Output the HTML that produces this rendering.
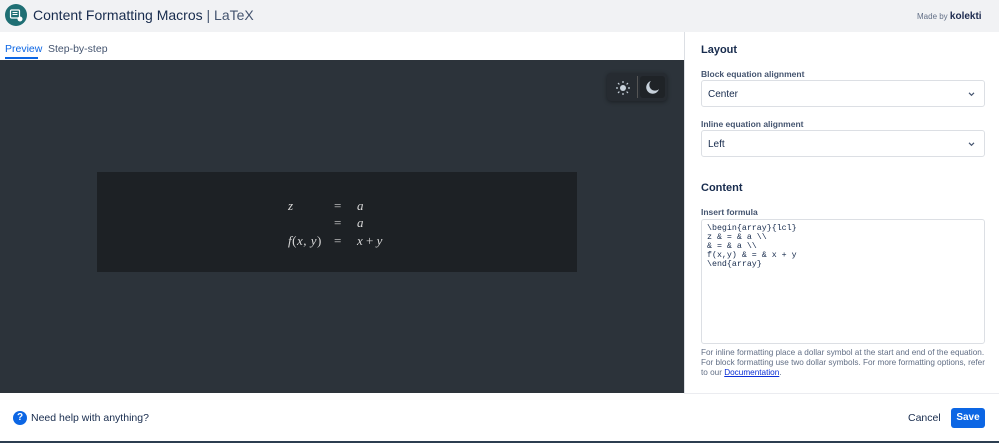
<!DOCTYPE html>
<html><head><style>
*{box-sizing:border-box;margin:0;padding:0}
body{width:999px;height:443px;overflow:hidden;font-family:"Liberation Sans",sans-serif;background:#fff;position:relative;color:#172b4d}
.abs{position:absolute}
.lbl{font-size:8.5px;font-weight:bold;color:#44546f}
.sel{border:1px solid #dcdfe4;border-radius:3px;height:27px;font-size:10px;padding:8px 6px;color:#172b4d}
.sel svg{position:absolute;right:9px;top:11px}
.m{font-family:"Liberation Serif",serif;font-style:italic;color:#d8d8d8;font-size:13px}
</style></head><body>
<div class="abs" style="left:0;top:0;width:999px;height:32px;background:#f1f2f4"></div>
<div class="abs" style="left:5px;top:4px;width:22px;height:22px;border-radius:50%;background:#1f6f74"></div>
<svg class="abs" style="left:9px;top:8px" width="15" height="15" viewBox="0 0 15 15"><rect x="1.5" y="2" width="9" height="8" rx="1" fill="none" stroke="#fff" stroke-width="1.2"/><path d="M3.5 4.5h5M3.5 6.5h5" stroke="#fff"/><circle cx="11" cy="11" r="2.5" fill="#fff"/></svg>
<div class="abs" style="left:33px;top:7px;font-size:14px;color:#172b4d">Content Formatting Macros <span style="color:#44546f">| LaTeX</span></div>
<div class="abs" style="left:917px;top:11px;font-size:8px;color:#626f86">Made by <b style="font-size:10px;color:#1d2b4f">kolekti</b></div>
<div class="abs" style="left:5px;top:43px;font-size:10.5px;color:#0c66e4">Preview</div>
<div class="abs" style="left:5px;top:57px;width:33px;height:2px;background:#0c66e4"></div>
<div class="abs" style="left:48px;top:43px;font-size:10.5px;color:#44546f">Step-by-step</div>
<div class="abs" style="left:0;top:60px;width:684px;height:333px;background:#2c333a"></div>
<div class="abs" style="left:607px;top:73px;width:60px;height:28px;border-radius:4px;background:#262b31;box-shadow:0 1px 4px rgba(0,0,0,.4)"></div>
<div class="abs" style="left:637px;top:76px;width:1px;height:22px;background:#555"></div>
<div class="abs" style="left:640px;top:76px;width:25px;height:22px;border-radius:3px;background:#1f2327"></div>
<svg class="abs" style="left:615px;top:80px" width="16" height="16" viewBox="0 0 16 16"><circle cx="8" cy="8" r="3" fill="#c7d1db"/><path d="M8 1v2M8 13v2M1 8h2M13 8h2M3 3l1.4 1.4M11.6 11.6L13 13M3 13l1.4-1.4M11.6 4.4L13 3" stroke="#c7d1db" stroke-width="1.2"/></svg>
<svg class="abs" style="left:645px;top:80px" width="15" height="15" viewBox="0 0 15 15"><path d="M6 1a6.5 6.5 0 1 0 8 8A5.5 5.5 0 0 1 6 1z" fill="#c7d1db"/></svg>
<div class="abs" style="left:97px;top:172px;width:480px;height:100px;background:#1d2125"></div>
<div class="abs m" style="left:288px;top:198px">z</div>
<div class="abs m" style="left:334px;top:198px;font-style:normal">=</div>
<div class="abs m" style="left:357px;top:198px">a</div>
<div class="abs m" style="left:334px;top:215px;font-style:normal">=</div>
<div class="abs m" style="left:357px;top:215px">a</div>
<div class="abs m" style="left:288px;top:233px;letter-spacing:0.5px">f<span style="font-style:normal">(</span>x, y<span style="font-style:normal">)</span></div>
<div class="abs m" style="left:334px;top:233px;font-style:normal">=</div>
<div class="abs m" style="left:357px;top:233px">x <span style="font-style:normal">+</span> y</div>
<div class="abs" style="left:684px;top:32px;width:1px;height:361px;background:#dcdfe4"></div>
<div class="abs" style="left:701px;top:44px;font-size:11px;font-weight:bold;color:#172b4d">Layout</div>
<div class="abs lbl" style="left:701px;top:69px">Block equation alignment</div>
<div class="abs sel" style="left:701px;top:80px;width:284px">Center<svg width="7" height="5" viewBox="0 0 8 6"><path d="M1 1l3 3 3-3" fill="none" stroke="#44546f" stroke-width="1.4"/></svg></div>
<div class="abs lbl" style="left:701px;top:119px">Inline equation alignment</div>
<div class="abs sel" style="left:701px;top:130px;width:284px">Left<svg width="7" height="5" viewBox="0 0 8 6"><path d="M1 1l3 3 3-3" fill="none" stroke="#44546f" stroke-width="1.4"/></svg></div>
<div class="abs" style="left:701px;top:182px;font-size:11px;font-weight:bold;color:#172b4d">Content</div>
<div class="abs lbl" style="left:701px;top:207px">Insert formula</div>
<div class="abs" style="left:701px;top:219px;width:284px;height:125px;border:1px solid #dcdfe4;border-radius:3px;padding:4px 5px;font-family:'Liberation Mono',monospace;font-size:8.3px;line-height:9px;color:#172b4d;white-space:pre">\begin{array}{lcl}
z &amp; = &amp; a \\
&amp; = &amp; a \\
f(x,y) &amp; = &amp; x + y
\end{array}</div>
<div class="abs" style="left:701px;top:348px;width:290px;font-size:8.2px;line-height:10px;color:#626f86">For inline formatting place a dollar symbol at the start and end of the equation. For block formatting use two dollar symbols. For more formatting options, refer to our <u style="color:#0c2fd6">Documentation</u>.</div>
<div class="abs" style="left:684px;top:393px;width:315px;height:1px;background:#ebecf0"></div>
<div class="abs" style="left:13px;top:411px;width:14px;height:14px;border-radius:50%;background:#0c66e4;color:#fff;font-size:10px;font-weight:bold;text-align:center;line-height:14px">?</div>
<div class="abs" style="left:31px;top:412px;font-size:10.5px;color:#172b4d">Need help with anything?</div>
<div class="abs" style="left:908px;top:412px;font-size:10.5px;color:#172b4d">Cancel</div>
<div class="abs" style="left:951px;top:408px;width:34px;height:20px;border-radius:3px;background:#0c66e4;color:#fff;font-size:10px;font-weight:bold;text-align:center;line-height:20px">Save</div>
<div class="abs" style="left:0;top:441px;width:999px;height:2px;background:#2c3e50"></div>
</body></html>
